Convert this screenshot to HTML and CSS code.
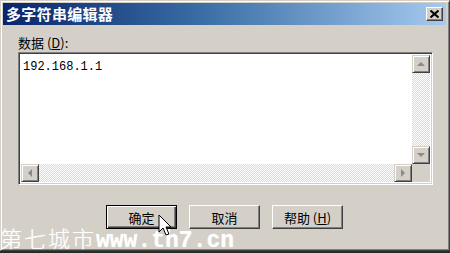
FILE: index.html
```html
<!DOCTYPE html>
<html>
<head>
<meta charset="utf-8">
<link rel="stylesheet" href="styles.css">
</head>
<body>
<div class="window">
  <div class="titlebar">
    <span class="title">多字符串编辑器</span>
    <span class="close"><svg width="9" height="8" viewBox="0 0 9 8"><path d="M0.5 0.5 L8.5 7.5 M8.5 0.5 L0.5 7.5" stroke="#000" stroke-width="2"/></svg></span>
  </div>
  <div class="content">
    <div class="label">数据 (<u>D</u>):</div>
    <div class="editbox">
      <div class="textarea">192.168.1.1</div>
      <div class="vscroll">
        <div class="sbtn"><span class="tri up"></span></div>
        <div class="track"></div>
        <div class="sbtn"><span class="tri down"></span></div>
      </div>
      <div class="hscroll">
        <div class="sbtn"><span class="tri left"></span></div>
        <div class="track"></div>
        <div class="sbtn"><span class="tri right"></span></div>
      </div>
      <div class="corner"></div>
    </div>
    <div class="buttons">
      <div class="btn default"><span>确定</span></div>
      <div class="btn"><span>取消</span></div>
      <div class="btn"><span>帮助 (<u>H</u>)</span></div>
    </div>
  </div>
</div>
<div class="watermark"><span class="wm-cn">第七城市</span><span class="wm-en">www.th7.cn</span></div>
<svg class="cursor" width="14" height="24" viewBox="0 0 14 24"><path d="M1 1 L1 18 L5 14 L8 21 L11 20 L8 13 L13 13 Z" fill="#fff" stroke="#000" stroke-width="1" stroke-linejoin="miter"/></svg>
</body>
</html>
```
FILE: styles.css
```css
html, body {
  margin: 0;
  padding: 0;
  background: #2a2a2a;
}
body {
  position: relative;
  width: 450px;
  height: 253px;
  overflow: hidden;
}
.window {
  width: 450px;
  height: 251px;
  box-sizing: border-box;
  background: #d4d0c8;
  border-top: 1px solid #d4d0c8;
  border-left: 1px solid #d4d0c8;
  border-right: 1px solid #404040;
  border-bottom: 1px solid #404040;
  box-shadow: inset 1px 1px #ffffff, inset -1px -1px #808080;
  padding: 2px 3px 3px 2px;
  display: flex;
  flex-direction: column;
  font-family: "Noto Sans CJK SC", "Liberation Sans", sans-serif;
}
.titlebar {
  height: 22px;
  background: linear-gradient(to right, #0a246a 0%, #3a6ea5 45%, #a6caf0 100%);
  display: flex;
  align-items: center;
  justify-content: space-between;
  padding: 0 3px 0 3px;
}
.title {
  color: #fff;
  font-weight: bold;
  font-size: 15px;
  line-height: 18px;
  letter-spacing: 0.3px;
}
.close {
  width: 17px;
  height: 14px;
  box-sizing: border-box;
  background: #d4d0c8;
  border-top: 1px solid #fff;
  border-left: 1px solid #fff;
  border-right: 1px solid #404040;
  border-bottom: 1px solid #404040;
  box-shadow: inset -1px -1px #808080;
  display: flex;
  align-items: center;
  justify-content: center;
}
.content {
  padding: 10px 16px 0 15px;
  display: flex;
  flex-direction: column;
}
.label {
  font-size: 13px;
  line-height: 16px;
  color: #000;
  margin-bottom: 1px;
}
.editbox {
  width: 415px;
  height: 133px;
  box-sizing: border-box;
  border-top: 1px solid #808080;
  border-left: 1px solid #808080;
  border-right: 1px solid #fff;
  border-bottom: 1px solid #fff;
  box-shadow: inset 1px 1px #404040, inset -1px -1px #d4d0c8;
  padding: 2px;
  display: grid;
  grid-template-columns: 1fr 18px;
  grid-template-rows: 1fr 18px;
  background: #fff;
}
.textarea {
  font-family: "Liberation Mono", "DejaVu Sans Mono", monospace;
  font-size: 12px;
  line-height: 14px;
  padding: 5px 2px;
  color: #000;
}
.vscroll {
  display: flex;
  flex-direction: column;
}
.hscroll {
  display: flex;
}
.track {
  flex: 1;
  background: repeating-conic-gradient(#ffffff 0 25%, #dcd9d2 0 50%) 0 0 / 2px 2px;
}
.sbtn {
  width: 18px;
  height: 18px;
  box-sizing: border-box;
  background: #d4d0c8;
  border-top: 1px solid #d4d0c8;
  border-left: 1px solid #d4d0c8;
  border-right: 1px solid #404040;
  border-bottom: 1px solid #404040;
  box-shadow: inset 1px 1px #fff, inset -1px -1px #808080;
  display: flex;
  align-items: center;
  justify-content: center;
  flex: none;
}
.corner {
  background: #d4d0c8;
}
.tri {
  width: 0;
  height: 0;
  border: 4px solid transparent;
}
.tri.up { border-bottom-color: #8a8a8a; border-top-width: 0; }
.tri.down { border-top-color: #8a8a8a; border-bottom-width: 0; }
.tri.left { border-right-color: #8a8a8a; border-left-width: 0; }
.tri.right { border-left-color: #8a8a8a; border-right-width: 0; }
.buttons {
  display: flex;
  gap: 12px;
  padding-left: 88px;
  margin-top: 20px;
}
.btn {
  width: 71px;
  height: 24px;
  box-sizing: border-box;
  background: #d4d0c8;
  border-top: 1px solid #fff;
  border-left: 1px solid #fff;
  border-right: 1px solid #404040;
  border-bottom: 1px solid #404040;
  box-shadow: inset -1px -1px #808080;
  display: flex;
  align-items: center;
  justify-content: center;
  font-size: 13px;
  color: #000;
}
.btn.default {
  border: 1px solid #000;
  box-shadow: inset 1px 1px #fff, inset -1px -1px #404040, inset -2px -2px #808080;
}
.watermark {
  position: absolute;
  left: 0;
  top: 226px;
  color: #fff;
  white-space: nowrap;
  line-height: 22px;
  height: 22px;
  text-shadow: 0 0 1px rgba(255,255,255,0.6);
}
.wm-cn {
  font-family: "Noto Sans CJK SC", sans-serif;
  font-weight: 300;
  font-size: 22px;
  letter-spacing: 2px;
}
.wm-en {
  font-family: "Liberation Mono", monospace;
  font-weight: bold;
  font-size: 23px;
}
.cursor {
  position: absolute;
  left: 158px;
  top: 214px;
}
```
